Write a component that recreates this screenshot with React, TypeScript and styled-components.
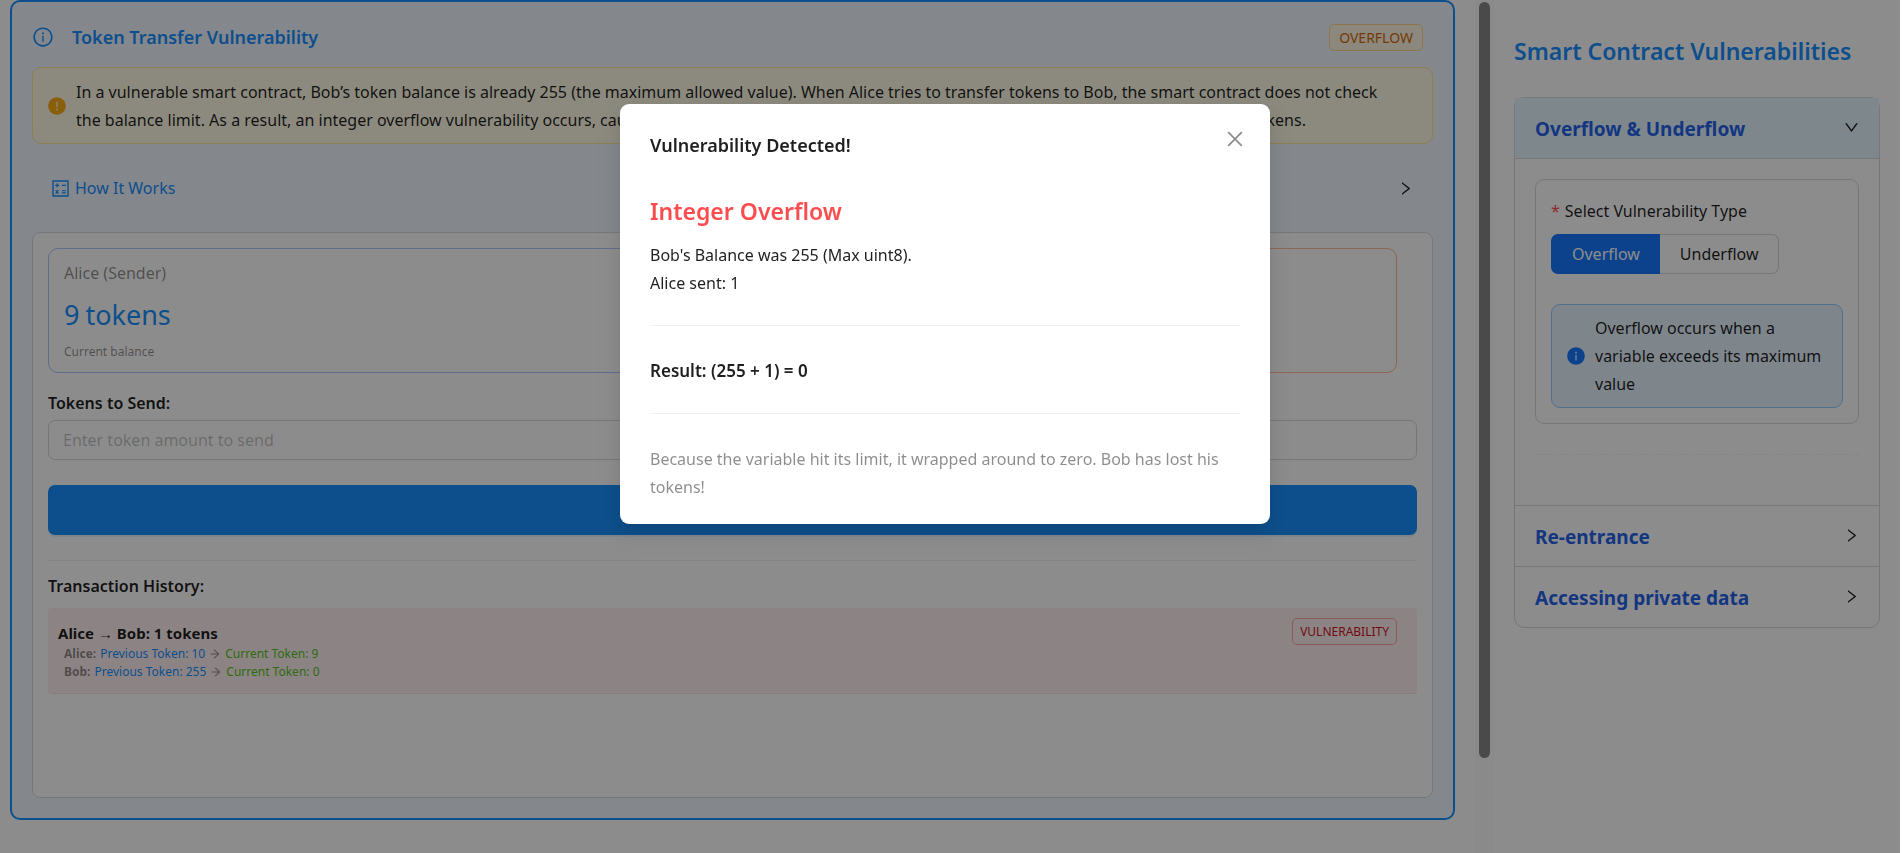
import React, { useState } from 'react';
import styled, { createGlobalStyle, css } from 'styled-components';
import {
  AiFillExclamationCircle,
  AiFillInfoCircle,
  AiOutlineArrowRight,
  AiOutlineCalculator,
  AiOutlineClose,
  AiOutlineDown,
  AiOutlineInfoCircle,
  AiOutlineRight,
} from 'react-icons/ai';

const color = {
  text: 'rgba(0, 0, 0, 0.88)',
  muted: 'rgba(0, 0, 0, 0.45)',
  placeholder: 'rgba(0, 0, 0, 0.25)',
  border: '#d9d9d9',
  split: 'rgba(5, 5, 5, 0.06)',
  blue: '#1890ff',
  primary: '#1677ff',
  green: '#52c41a',
  red: '#ff4d4f',
};

const GlobalStyle = createGlobalStyle`
  *, *::before, *::after { box-sizing: border-box; }
  body {
    margin: 0;
    background: #fff;
    color: ${color.text};
    font-family: "Noto Sans", "Open Sans", sans-serif;
    font-size: 16px;
    line-height: 28px;
    overflow: hidden;
  }
  h1, h2, h3, p, ul { margin: 0; padding: 0; }
  ul { list-style: none; }
  button, input { font: inherit; color: inherit; }
  svg { display: block; flex: none; }
`;

const Page = styled.div`
  display: flex;
  align-items: flex-start;
  min-height: 100vh;
`;

const Main = styled.main`
  flex: 1;
  min-width: 0;
  padding: 0 20px 32px 10px;
`;

const ScrollTrack = styled.div`
  flex: none;
  width: 19px;
  height: 100vh;
  padding: 2px 4px;
  background: #fcfcfc;
`;

const ScrollThumb = styled.div`
  width: 11px;
  height: 89%;
  border-radius: 6px;
  background: #888;
`;

const Sidebar = styled.aside`
  flex: none;
  width: 409px;
  padding: 33px 23px 32px 20px;
`;

const ExampleCard = styled.section`
  padding: 0 20px 20px;
  border: 2px solid ${color.blue};
  border-radius: 10px;
  background: #f0f7ff;
`;

const CardHeader = styled.header`
  display: flex;
  align-items: center;
  gap: 18px;
  height: 65px;
  padding: 5px 10px 0 0;
  color: ${color.blue};
`;

const CardTitle = styled.h2`
  flex: 1;
  font-size: 18px;
  font-weight: 600;
`;

const tagTones = {
  orange: css`
    border-color: #ffd591;
    background: #fff7e6;
    color: #d46b08;
    font-size: 14px;
    padding: 0 9px;
  `,
  red: css`
    border-color: #ffa39e;
    background: #fff1f0;
    color: #cf1322;
    font-size: 12px;
    padding: 0 7px;
  `,
};

const Tag = styled.span<{ $tone: 'orange' | 'red' }>`
  flex: none;
  height: 27px;
  border: 1px solid;
  border-radius: 5px;
  line-height: 25px;
  ${({ $tone }) => tagTones[$tone]}
`;

const Alert = styled.div<{ $tone: 'warning' | 'info' }>`
  display: flex;
  align-items: center;
  gap: 9px;
  padding: ${({ $tone }) => ($tone === 'warning' ? '10px 14px 9px' : '9px 14px')};
  border: 1px solid ${({ $tone }) => ($tone === 'warning' ? '#ffe58f' : '#91caff')};
  border-radius: 9px;
  background: ${({ $tone }) => ($tone === 'warning' ? '#fffbe6' : '#e6f4ff')};

  svg {
    color: ${({ $tone }) => ($tone === 'warning' ? '#faad14' : color.primary)};
  }
`;

const HowItWorks = styled.button`
  display: flex;
  align-items: center;
  gap: 4px;
  width: 100%;
  height: 88px;
  padding: 0 19px 0 18px;
  border: 0;
  background: none;
  color: ${color.blue};
  text-align: left;

  span { flex: 1; }
  svg:last-child { color: ${color.text}; }
`;

const TransferPanel = styled.div`
  padding: 15px;
  border: 1px solid ${color.border};
  border-radius: 8px;
  background: #fff;
`;

const Balances = styled.div`
  display: grid;
  grid-template-columns: 1fr 1fr;
  gap: 20px;
  padding-right: 20px;
  margin-bottom: 16px;
`;

const BalanceCard = styled.div<{ $border: string }>`
  padding: 10px 15px 9px;
  border: 1px solid ${({ $border }) => $border};
  border-radius: 10px;
  color: ${color.muted};
`;

const BalanceValue = styled.p<{ $color: string }>`
  display: flex;
  gap: 6px;
  margin: 8px 0 6px;
  color: ${({ $color }) => $color};
  font-size: 27px;
  line-height: 40px;
`;

const BalanceCaption = styled.p`
  font-size: 12px;
  line-height: 22px;
`;

const FieldLabel = styled.label`
  display: block;
  margin-bottom: 3px;
  font-weight: 600;
`;

const TextInput = styled.input`
  display: block;
  width: 100%;
  height: 40px;
  padding: 0 14px;
  border: 1px solid ${color.border};
  border-radius: 7px;
  background: #fff;
  outline: 0;

  &::placeholder { color: ${color.placeholder}; opacity: 1; }
`;

const SendButton = styled.button`
  display: block;
  width: 100%;
  height: 50px;
  margin-top: 25px;
  border: 0;
  border-radius: 7px;
  background: ${color.blue};
  box-shadow: 0 2px 0 rgba(5, 145, 255, 0.1);
  color: #fff;
`;

const Rule = styled.hr<{ $before: number; $after: number; $dashed?: boolean }>`
  margin: ${({ $before, $after }) => `${$before}px 0 ${$after}px`};
  border: 0;
  border-top: 1px ${({ $dashed }) => ($dashed ? 'dashed' : 'solid')} ${color.split};
`;

const HistoryTitle = styled.h3`
  margin-bottom: 8px;
  font-size: 16px;
  font-weight: 600;
`;

const HistoryList = styled.ul`
  min-height: 174px;
`;

const HistoryItem = styled.li`
  display: flex;
  align-items: flex-start;
  justify-content: space-between;
  padding: 10px 20px 12px 10px;
  border-bottom: 1px solid ${color.split};
  border-radius: 4px;
  background: #fff1f0;
`;

const TransferSummary = styled.div`
  padding-top: 4px;
`;

const TransferName = styled.strong`
  display: block;
  font-size: 15px;
  line-height: 23px;
`;

const BalanceChange = styled.div`
  display: flex;
  align-items: center;
  gap: 4px;
  padding-left: 6px;
  color: ${color.muted};
  font-size: 12px;
  line-height: 18px;
`;

const Amount = styled.span<{ $color: string }>`
  color: ${({ $color }) => $color};
`;

const SidebarTitle = styled.h1`
  margin-bottom: 28px;
  color: ${color.blue};
  font-size: 23px;
  font-weight: 600;
  line-height: 36px;
  white-space: nowrap;
`;

const Accordion = styled.div`
  border: 1px solid ${color.border};
  border-radius: 10px;
`;

const AccordionSection = styled.section`
  & + & { border-top: 1px solid ${color.border}; }
`;

const AccordionHeader = styled.button<{ $open?: boolean }>`
  display: flex;
  align-items: center;
  justify-content: space-between;
  width: 100%;
  height: 60px;
  padding: 2px 19px 0 20px;
  border: 0;
  background: ${({ $open }) => ($open ? '#e6f7ff' : 'none')};
  color: #2563eb;
  font-size: 19px;
  font-weight: 700;
  text-align: left;

  svg { color: ${color.text}; margin-bottom: 3px; }
`;

const AccordionBody = styled.div`
  padding: 20px;
  border-top: 1px solid ${color.border};
`;

const OptionCard = styled.div`
  padding: 17px 15px 15px;
  border: 1px solid ${color.border};
  border-radius: 9px;
`;

const RadioGroup = styled.fieldset`
  min-width: 0;
  margin: 0 0 30px;
  padding: 0;
  border: 0;
`;

const GroupLabel = styled.legend`
  margin-bottom: 9px;
  padding: 0;
`;

const Required = styled.span`
  margin-right: 5px;
  color: ${color.red};
`;

const RadioRow = styled.div`
  display: flex;
`;

const RadioButton = styled.label<{ $checked: boolean }>`
  height: 40px;
  padding: 0 20px;
  border: 1px solid ${({ $checked }) => ($checked ? color.primary : color.border)};
  background: ${({ $checked }) => ($checked ? color.primary : '#fff')};
  color: ${({ $checked }) => ($checked ? '#fff' : color.text)};
  line-height: 38px;
  cursor: pointer;

  &:first-child { border-radius: 7px 0 0 7px; border-right-width: 0; }
  &:last-child { border-radius: 0 7px 7px 0; border-left-width: 0; }

  input {
    appearance: none;
    position: absolute;
    width: 0;
    height: 0;
    margin: 0;
  }
`;

const Mask = styled.div`
  position: fixed;
  inset: 0 3px 0 0;
  display: flex;
  justify-content: center;
  align-items: flex-start;
  padding: 104px 10px 24px 0;
  background: rgba(0, 0, 0, 0.45);
`;

const Dialog = styled.div`
  position: relative;
  width: 650px;
  max-width: 100%;
  padding: 27px 30px 23px;
  border-radius: 9px;
  background: #fff;
  box-shadow:
    0 6px 16px 0 rgba(0, 0, 0, 0.08),
    0 3px 6px -4px rgba(0, 0, 0, 0.12),
    0 9px 28px 8px rgba(0, 0, 0, 0.05);
`;

const DialogTitle = styled.h2`
  margin-bottom: 36px;
  font-size: 18px;
  font-weight: 600;
`;

const CloseButton = styled.button`
  position: absolute;
  top: 20px;
  right: 20px;
  display: grid;
  place-items: center;
  width: 30px;
  height: 30px;
  padding: 0;
  border: 0;
  background: none;
  color: ${color.muted};
`;

const DialogHeading = styled.h3`
  margin-bottom: 14px;
  color: ${color.red};
  font-size: 23px;
  font-weight: 600;
  line-height: 32px;
`;

const Result = styled.strong`
  display: block;
  font-size: 17px;
  font-weight: 600;
`;

const Muted = styled.p`
  color: ${color.muted};
`;

const changes = [
  { name: 'Alice', before: 10, after: 9 },
  { name: 'Bob', before: 255, after: 0 },
];

export default function App() {
  const [kind, setKind] = useState('Overflow');
  const [amount, setAmount] = useState('');
  const [open, setOpen] = useState(true);

  return (
    <>
      <GlobalStyle />
      <Page>
        <Main>
          <ExampleCard>
            <CardHeader>
              <AiOutlineInfoCircle size={22} />
              <CardTitle>Token Transfer Vulnerability</CardTitle>
              <Tag $tone="orange">OVERFLOW</Tag>
            </CardHeader>
            <Alert $tone="warning">
              <AiFillExclamationCircle size={20} />
              <p>
                In a vulnerable smart contract, Bob’s token balance is already 255 (the maximum
                allowed value). When Alice tries to transfer tokens to Bob, the smart contract does
                not check
                <br />
                the balance limit. As a result, an integer overflow vulnerability occurs, causing
                Bob’s balance to wrap around and reset to zero, which means Bob loses all his
                tokens.
              </p>
            </Alert>
            <HowItWorks type="button">
              <AiOutlineCalculator size={21} />
              <span>How It Works</span>
              <AiOutlineRight size={17} />
            </HowItWorks>
            <TransferPanel>
              <Balances>
                <BalanceCard $border="#adc6ff">
                  <p>Alice (Sender)</p>
                  <BalanceValue $color={color.blue}>
                    <span>9</span>
                    <span>tokens</span>
                  </BalanceValue>
                  <BalanceCaption>Current balance</BalanceCaption>
                </BalanceCard>
                <BalanceCard $border="#ffbb96">
                  <p>Bob (Receiver)</p>
                  <BalanceValue $color="#fa541c">
                    <span>0</span>
                    <span>tokens</span>
                  </BalanceValue>
                  <BalanceCaption>Current balance</BalanceCaption>
                </BalanceCard>
              </Balances>
              <FieldLabel htmlFor="amount">Tokens to Send:</FieldLabel>
              <TextInput
                id="amount"
                placeholder="Enter token amount to send"
                value={amount}
                onChange={(e) => setAmount(e.target.value)}
              />
              <SendButton type="button">Send Tokens</SendButton>
              <Rule $before={25} $after={11} />
              <HistoryTitle>Transaction History:</HistoryTitle>
              <HistoryList>
                <HistoryItem>
                  <TransferSummary>
                    <TransferName>Alice → Bob: 1 tokens</TransferName>
                    {changes.map((c) => (
                      <BalanceChange key={c.name}>
                        <strong>{c.name}:</strong>
                        <Amount $color={color.blue}>Previous Token: {c.before}</Amount>
                        <AiOutlineArrowRight size={12} />
                        <Amount $color={color.green}>Current Token: {c.after}</Amount>
                      </BalanceChange>
                    ))}
                  </TransferSummary>
                  <Tag $tone="red">VULNERABILITY</Tag>
                </HistoryItem>
              </HistoryList>
            </TransferPanel>
          </ExampleCard>
        </Main>
        <ScrollTrack aria-hidden="true">
          <ScrollThumb />
        </ScrollTrack>
        <Sidebar>
          <SidebarTitle>Smart Contract Vulnerabilities</SidebarTitle>
          <Accordion>
            <AccordionSection>
              <AccordionHeader type="button" aria-expanded="true" $open>
                Overflow &amp; Underflow
                <AiOutlineDown size={17} />
              </AccordionHeader>
              <AccordionBody>
                <OptionCard>
                  <RadioGroup>
                    <GroupLabel>
                      <Required>*</Required>Select Vulnerability Type
                    </GroupLabel>
                    <RadioRow>
                      {['Overflow', 'Underflow'].map((name) => (
                        <RadioButton key={name} $checked={kind === name}>
                          <input
                            type="radio"
                            name="kind"
                            value={name}
                            checked={kind === name}
                            onChange={() => setKind(name)}
                          />
                          {name}
                        </RadioButton>
                      ))}
                    </RadioRow>
                  </RadioGroup>
                  <Alert $tone="info">
                    <AiFillInfoCircle size={20} />
                    <p>Overflow occurs when a variable exceeds its maximum value</p>
                  </Alert>
                </OptionCard>
                <Rule $before={30} $after={30} $dashed />
              </AccordionBody>
            </AccordionSection>
            <AccordionSection>
              <AccordionHeader type="button" aria-expanded="false">
                Re-entrance
                <AiOutlineRight size={17} />
              </AccordionHeader>
            </AccordionSection>
            <AccordionSection>
              <AccordionHeader type="button" aria-expanded="false">
                Accessing private data
                <AiOutlineRight size={17} />
              </AccordionHeader>
            </AccordionSection>
          </Accordion>
        </Sidebar>
      </Page>
      {open && (
        <Mask>
          <Dialog role="dialog" aria-modal="true" aria-labelledby="dialog-title">
            <DialogTitle id="dialog-title">Vulnerability Detected!</DialogTitle>
            <CloseButton type="button" aria-label="Close" onClick={() => setOpen(false)}>
              <AiOutlineClose size={22} />
            </CloseButton>
            <DialogHeading>Integer Overflow</DialogHeading>
            <p>Bob's Balance was 255 (Max uint8).</p>
            <p>Alice sent: 1</p>
            <Rule $before={28} $after={31} />
            <Result>Result: (255 + 1) = 0</Result>
            <Rule $before={28} $after={31} />
            <Muted>
              Because the variable hit its limit, it wrapped around to zero. Bob has lost his tokens!
            </Muted>
          </Dialog>
        </Mask>
      )}
    </>
  );
}
